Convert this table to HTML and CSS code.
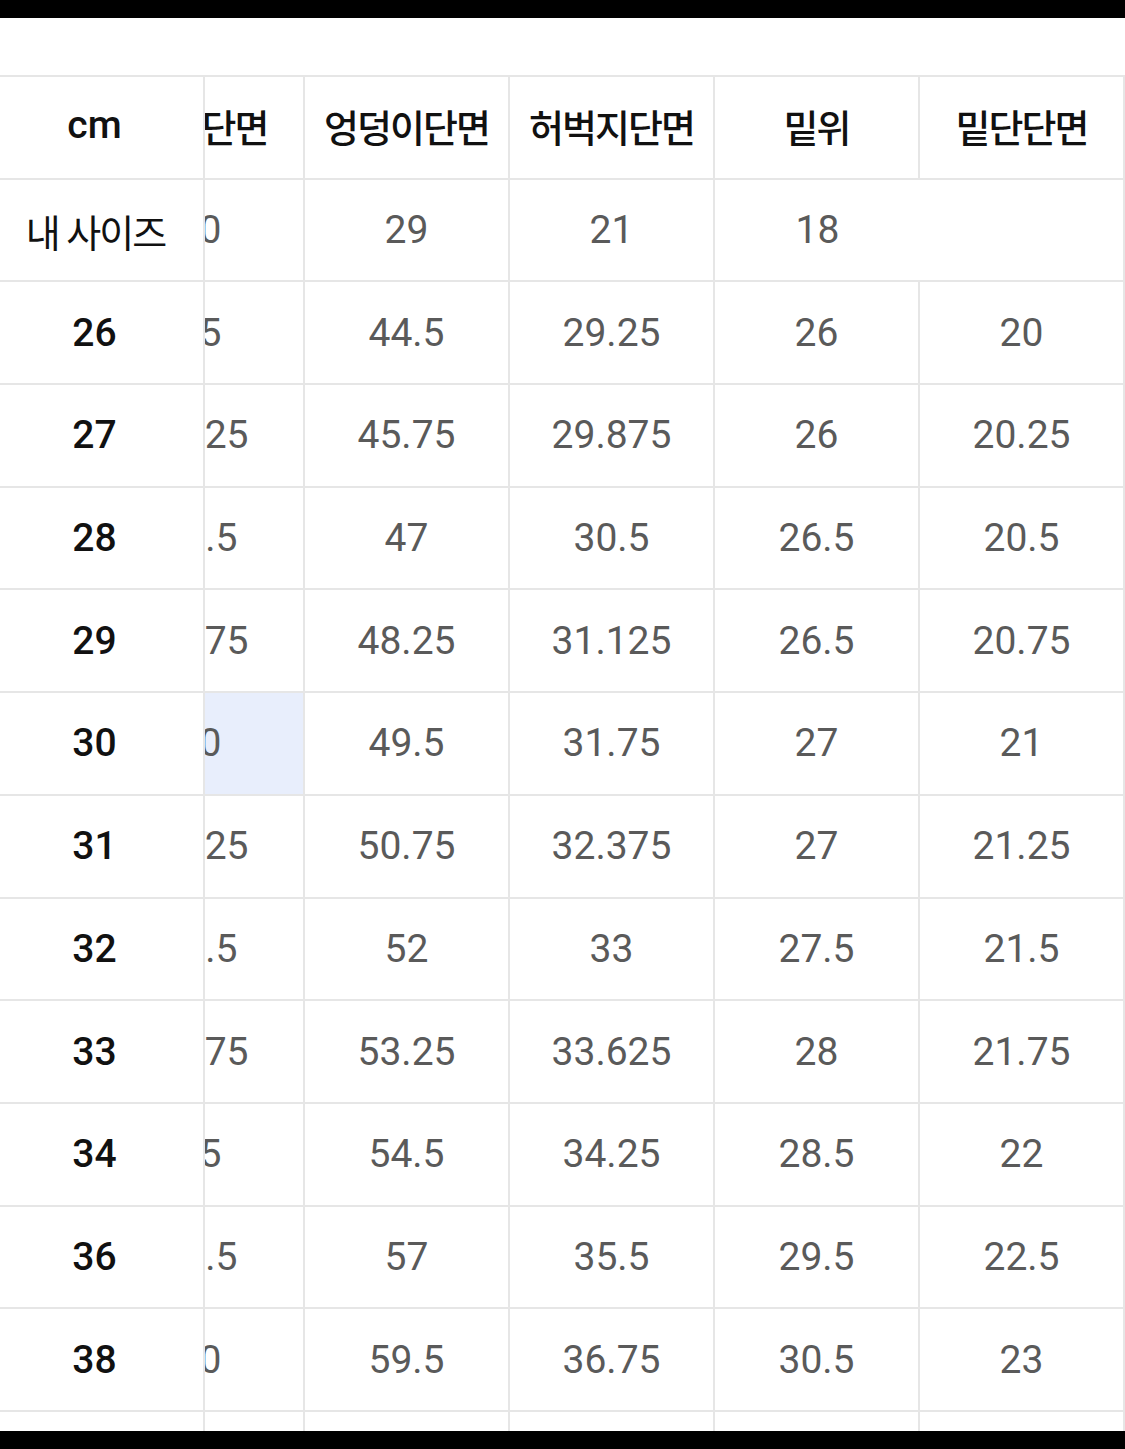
FILE: index.html
```html
<!DOCTYPE html>
<html lang="ko">
<head>
<meta charset="utf-8">
<title>사이즈표</title>
<link rel="stylesheet" href="styles.css">
</head>
<body>
<div class="screen">
  <div class="bar"></div>
  <main class="content">
    <div class="table">
      <div class="fixed-col">
        <div class="cell head label">cm</div>
        <div class="cell label ko">내 사이즈</div>
        <div class="cell label">26</div>
        <div class="cell label">27</div>
        <div class="cell label">28</div>
        <div class="cell label">29</div>
        <div class="cell label">30</div>
        <div class="cell label">31</div>
        <div class="cell label">32</div>
        <div class="cell label">33</div>
        <div class="cell label">34</div>
        <div class="cell label">36</div>
        <div class="cell label">38</div>
        <div class="cell label">40</div>
      </div>
      <div class="viewport">
        <div class="grid">
          <div class="cell head ko waist">허리단면</div>
          <div class="cell head ko">엉덩이단면</div>
          <div class="cell head ko">허벅지단면</div>
          <div class="cell head ko">밑위</div>
          <div class="cell head ko">밑단단면</div>

          <div class="cell waist">40</div>
          <div class="cell">29</div>
          <div class="cell">21</div>
          <div class="cell open">18</div>
          <div class="cell"></div>

          <div class="cell waist">35</div>
          <div class="cell">44.5</div>
          <div class="cell">29.25</div>
          <div class="cell">26</div>
          <div class="cell">20</div>

          <div class="cell waist">36.25</div>
          <div class="cell">45.75</div>
          <div class="cell">29.875</div>
          <div class="cell">26</div>
          <div class="cell">20.25</div>

          <div class="cell waist">37.5</div>
          <div class="cell">47</div>
          <div class="cell">30.5</div>
          <div class="cell">26.5</div>
          <div class="cell">20.5</div>

          <div class="cell waist">38.75</div>
          <div class="cell">48.25</div>
          <div class="cell">31.125</div>
          <div class="cell">26.5</div>
          <div class="cell">20.75</div>

          <div class="cell waist selected">40</div>
          <div class="cell">49.5</div>
          <div class="cell">31.75</div>
          <div class="cell">27</div>
          <div class="cell">21</div>

          <div class="cell waist">41.25</div>
          <div class="cell">50.75</div>
          <div class="cell">32.375</div>
          <div class="cell">27</div>
          <div class="cell">21.25</div>

          <div class="cell waist">42.5</div>
          <div class="cell">52</div>
          <div class="cell">33</div>
          <div class="cell">27.5</div>
          <div class="cell">21.5</div>

          <div class="cell waist">43.75</div>
          <div class="cell">53.25</div>
          <div class="cell">33.625</div>
          <div class="cell">28</div>
          <div class="cell">21.75</div>

          <div class="cell waist">45</div>
          <div class="cell">54.5</div>
          <div class="cell">34.25</div>
          <div class="cell">28.5</div>
          <div class="cell">22</div>

          <div class="cell waist">47.5</div>
          <div class="cell">57</div>
          <div class="cell">35.5</div>
          <div class="cell">29.5</div>
          <div class="cell">22.5</div>

          <div class="cell waist">50</div>
          <div class="cell">59.5</div>
          <div class="cell">36.75</div>
          <div class="cell">30.5</div>
          <div class="cell">23</div>

          <div class="cell waist">52.5</div>
          <div class="cell">62</div>
          <div class="cell">38</div>
          <div class="cell">31.5</div>
          <div class="cell">23.5</div>
        </div>
      </div>
    </div>
  </main>
  <div class="bar"></div>
</div>
</body>
</html>
```
FILE: styles.css
```css
* { box-sizing: border-box; }

html, body {
  margin: 0;
  padding: 0;
  background: #000;
}

.screen {
  width: 1125px;
  height: 1449px;
  display: flex;
  flex-direction: column;
  overflow: hidden;
}

.bar {
  flex: 0 0 18px;
  background: #000;
}

.content {
  flex: 1 1 auto;
  background: #fff;
  overflow: hidden;
  padding-top: 57px;
  font-family: Roboto, "Noto Sans CJK KR", sans-serif;
}

.table {
  display: flex;
  border-top: 2px solid #e6e6e6;
}

.fixed-col {
  flex: 0 0 205px;
  display: flex;
  flex-direction: column;
  border-right: 2px solid #e6e6e6;
  background: #fff;
}

.viewport {
  flex: 1 1 auto;
  overflow: hidden;
}

.grid {
  display: grid;
  grid-template-columns: repeat(5, 205px);
  grid-auto-rows: 102.7px;
  margin-left: -105px;
  width: 1025px;
}

.cell {
  height: 102.7px;
  display: flex;
  align-items: center;
  justify-content: center;
  border-bottom: 2px solid #e6e6e6;
  font-size: 39px;
  color: #5a5a5a;
  white-space: nowrap;
}

.grid .cell {
  border-right: 2px solid #e6e6e6;
}

.grid .cell.waist {
  padding-right: 4px;
}

.grid .cell.open {
  border-right: 0;
}

.fixed-col .cell {
  padding-right: 14px;
}

.label {
  color: #111;
  font-weight: 500;
}

.head {
  color: #111;
  font-weight: 500;
  padding-bottom: 4px;
}

.grid .head.ko {
  font-size: 38px;
  letter-spacing: -2px;
}

.grid .head.ko.waist {
  padding-right: 0;
}

.label.ko {
  font-size: 38px;
  font-weight: 400;
  letter-spacing: -2px;
  padding-right: 12px;
}

.selected {
  background: #e8eefc;
}
```
